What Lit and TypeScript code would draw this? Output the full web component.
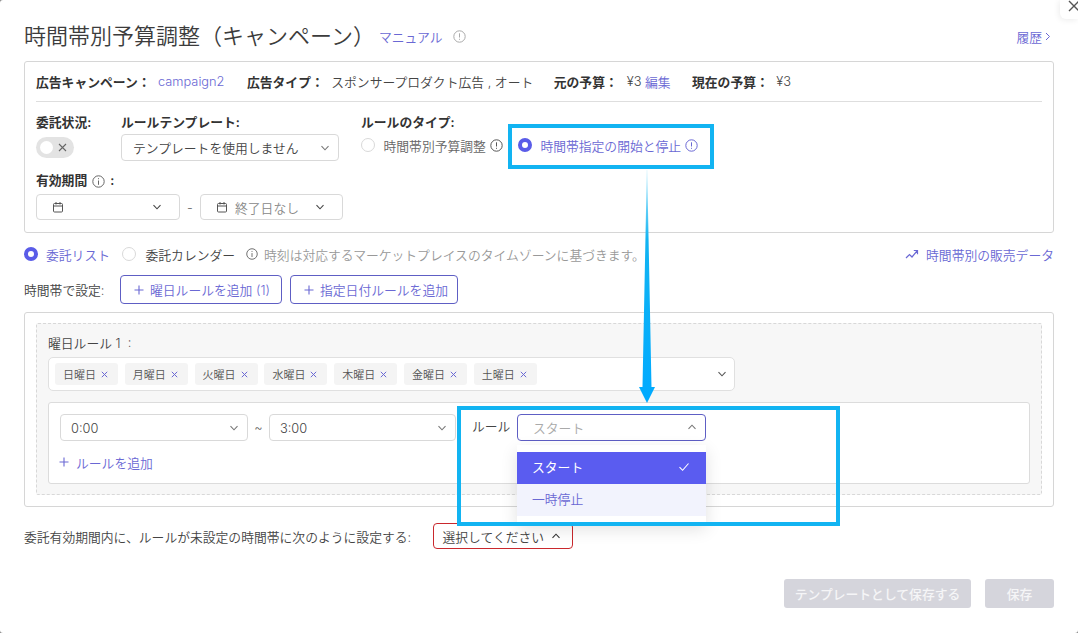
import { LitElement, html, css, svg } from "lit";
import { customElement } from "lit/decorators.js";

const chevron = (up = false, color = "#777") => html`<svg class="chev" width="10" height="10" viewBox="0 0 10 10" fill="none" stroke=${color} stroke-width="1.1"><path d=${up ? "M1.5 6.8 5 3.2l3.5 3.6" : "M1.5 3.2 5 6.8l3.5-3.6"}/></svg>`;
const cal = () => html`<svg width="12" height="12" viewBox="0 0 12 12" fill="none" stroke="#555" stroke-width="1"><rect x="1.5" y="2.5" width="9" height="8.5" rx="1"/><path d="M1.5 5h9M4 1v2.5M8 1v2.5"/></svg>`;
const excl = (color = "#555", size = 13) => html`<svg class="ic" width=${size} height=${size} viewBox="0 0 13 13" fill="none" stroke=${color} stroke-width="1"><circle cx="6.5" cy="6.5" r="5.7"/><path d="M6.5 3.3v4.2M6.5 8.8v1"/></svg>`;
const info = (color = "#666", size = 13) => html`<svg class="ic" width=${size} height=${size} viewBox="0 0 13 13" fill="none" stroke=${color} stroke-width="1"><circle cx="6.5" cy="6.5" r="5.7"/><path d="M6.5 3.2v1M6.5 5.5v4.3"/></svg>`;
const plus = () => html`<svg width="10" height="10" viewBox="0 0 10 10" fill="none" stroke="currentColor" stroke-width="1.1"><path d="M5 .5v9M.5 5h9"/></svg>`;
const days = ["日曜日", "月曜日", "火曜日", "水曜日", "木曜日", "金曜日", "土曜日"];

@customElement("app-root")
export class AppRoot extends LitElement {
  static styles = css`
    :host { display: block; width: 1078px; height: 633px; position: relative; overflow: hidden; background: #8a8a8a;
      font-family: Inter, "Noto Sans CJK JP", sans-serif; font-size: 12.8px; color: #444; font-weight: 350; }
    * { box-sizing: border-box; }
    .page { padding: 0 24px; width: 1078px; height: 633px; background: #fff; border-radius: 3px; }
    .link { color: #6a68d4; }
    .ic { flex: none; }
    .head { display: flex; align-items: center; height: 61px; padding-top: 11px; }
    h1 { margin: 0; font-size: 22px; font-weight: 350; color: #3c3c3c; line-height: 28px; white-space: nowrap; }
    .manual { margin-left: 4px; }
    .head .q { margin-left: 10px; display: flex; }
    .history { margin-left: auto; margin-right: 3px; display: flex; align-items: center; gap: 3px; }
    .card { border: 1px solid #d6d6d6; border-radius: 3px; background: #fff; }
    .card1 { height: 172px; padding: 0 11px; }
    .info-row { height: 40px; border-bottom: 1px solid #dedede; display: flex; align-items: center; white-space: nowrap; }
    b { font-weight: 600; color: #333; }
    .info-row span { white-space: pre; }
    .v { margin-left: 7.5px; }
    .v.yen { margin-left: 9px; }
    .g22 { margin-left: 22.5px; }
    .g18 { margin-left: 20.5px; }
    .g21 { margin-left: 21.5px; }
    .edit { margin-left: 3.5px; }
    .fields { display: flex; margin-top: 11px; }
    .label { height: 20px; line-height: 20px; margin-bottom: 1px; font-weight: 600; color: #333; display: flex; align-items: center; gap: 5px; white-space: nowrap; }
    .f1 { width: 85px; } .f2 { width: 240px; }
    .toggle { width: 38px; height: 21px; margin-top: 4px; border-radius: 11px; background: #e3e3e3; position: relative; }
    .toggle i { position: absolute; left: 4px; top: 4px; width: 13px; height: 13px; border-radius: 50%; background: #fff; }
    .toggle svg { position: absolute; right: 7px; top: 6px; }
    .select { height: 27px; border: 1px solid #d9d9d9; border-radius: 4px; background: #fff; display: flex; align-items: center; padding: 0 8px 0 11px; white-space: nowrap; color: #444; }
    .select .chev { margin-left: auto; flex: none; }
    .s-template { width: 218px; }
    .radios { display: flex; align-items: center; height: 22px; white-space: nowrap; }
    .radio { width: 14px; height: 14px; border-radius: 50%; border: 1px solid #d9d9d9; background: #fff; flex: none; }
    .radio.on { border: 4px solid #5a5ce8; }
    .r-text { margin-left: 8.5px; margin-right: 4px; color: #666; }
    .spacer-s { width: 15px; }
    .target { color: #6a68d4; }
    .dates { display: flex; align-items: center; }
    .valid { margin-top: 10px; }
    .label.vl { margin-bottom: 3px; }
    .dates .select { width: 144px; gap: 7px; padding: 0 17px 0 15px; height: 26px; }
    .dash { width: 20px; text-align: center; color: #666; }
    .dates .end { width: 143px; color: #888; }
    .list-row { display: flex; align-items: center; height: 18px; margin-top: 12px; white-space: nowrap; }
    .list-t1 { margin-left: 8px; }
    .radio2 { margin-left: 12.5px; }
    .list-t2 { margin-left: 9px; }
    .hint { color: #999; display: flex; align-items: center; gap: 6px; margin-left: 11px; }
    .sales { margin-left: auto; display: flex; align-items: center; gap: 7px; }
    .add-row { display: flex; align-items: center; height: 29px; margin-top: 12px; gap: 8px; }
    .add-l { width: 88px; white-space: nowrap; }
    .btn { height: 29px; border: 1px solid #5e5ec4; border-radius: 4px; color: #6a68d4; display: flex; align-items: center; gap: 6px; padding: 0 0 0 13px; background: #fff; white-space: nowrap; }
    .b1 { width: 162px; } .b2 { width: 168px; }
    .card2 { margin-top: 8px; height: 195px; padding: 10px 11px; }
    .dashed { height: 172px; border: 1px dashed #d8d8d8; background: #f7f7f7; padding: 10px 11px; border-radius: 2px; }
    .week-label { height: 20px; line-height: 20px; margin-bottom: 3px; color: #444; white-space: pre; }
    .tags { width: 687px; height: 34px; background: #fff; border: 1px solid #e0e0e0; border-radius: 5px; display: flex; align-items: center; padding: 0 6px; gap: 6.8px; }
    .tag { height: 22px; width: 63px; flex: none; background: #f4f4f4; border-radius: 3px; display: flex; align-items: center; justify-content: space-between; padding: 0 10px 0 8px; font-size: 11px; color: #555; }
    .tag svg { flex: none; }
    .tags .chev { margin-left: auto; margin-right: 1px; }
    .rule { margin-top: 11px; height: 82px; width: 982px; background: #fff; border: 1px solid #dcdcdc; border-radius: 3px; padding: 11px; }
    .times { display: flex; align-items: flex-start; }
    .s-time { width: 188px; padding-top: 1px; padding-left: 10px; }
    .s-time.t2 { width: 187px; }
    .tilde { width: 21px; height: 27px; line-height: 27px; text-align: center; color: #666; }
    .rule-label { width: 61px; height: 26px; line-height: 26px; padding-left: 16px; color: #444; white-space: nowrap; }
    .rule-sel { position: relative; width: 189px; }
    .rule-sel .select { border-color: #5e5ec4; color: #aaa; padding-left: 15px; padding-bottom: 1px; width: 189px; }
    .drop { position: absolute; left: 0; top: 31px; width: 189px; padding: 7px 0; background: #fff; box-shadow: 0 6px 16px rgba(0,0,0,.12); z-index: 2; }
    .opt { height: 32px; display: flex; align-items: center; justify-content: space-between; padding: 0 16px 3px 15px; }
    .opt.sel { background: #5a5cf0; color: #fff; font-weight: 400; }
    .opt.hov { background: #f2f3fd; color: #6a68d4; }
    .add-rule { display: flex; align-items: center; gap: 7px; margin-top: 11px; height: 20px; color: #6a68d4; margin-left: -1px; }
    .bottom { display: flex; align-items: center; margin-top: 16px; height: 26px; white-space: nowrap; }
    .bottom-l { width: 408.5px; }
    .err { height: 26px; width: 140px; border: 1px solid #c9282d; border-radius: 4px; display: flex; align-items: center; gap: 7px; padding: 0 9px; background: #fff; color: #444; }
    .footer { display: flex; justify-content: flex-end; gap: 14px; margin-top: 30px; }
    .ghost { height: 29px; background: #d5d5dc; color: #f5f5f7; border-radius: 3px; display: flex; align-items: center; justify-content: center; font-weight: 500; }
    .g1 { width: 187px; } .g2 { width: 69px; }
    .note { position: absolute; border: 4px solid #12b4f2; z-index: 5; pointer-events: none; }
    .n1 { left: 508px; top: 124px; width: 206px; height: 45px; }
    .n2 { left: 457px; top: 406px; width: 383px; height: 120px; }
    .arrow { position: absolute; left: 637px; top: 170px; z-index: 6; }
    .close { position: absolute; right: 0; top: 0; width: 18px; height: 19px; background: #fff; border-radius: 0 0 0 6px; box-shadow: -1px 1px 6px rgba(0,0,0,.08); }
    .close svg { position: absolute; left: 8px; top: 0; }
  `;

  render() {
    return html`
      <div class="page">
        <div class="head">
          <h1>時間帯別予算調整（キャンペーン）</h1>
          <span class="manual link">マニュアル</span>
          <span class="q">${excl("#aaa", 13)}</span>
          <span class="history link">履歴 <svg width="6" height="9" viewBox="0 0 6 9" fill="none" stroke="#6a68d4"><path d="M1 1l3.5 3.5L1 8"/></svg></span>
        </div>

        <section class="card card1">
          <div class="info-row">
            <b>広告キャンペーン：</b><span class="link v">campaign2</span>
            <b class="g22">広告タイプ：</b><span class="v">スポンサープロダクト広告 , オート</span>
            <b class="g18">元の予算：</b><span class="v yen">¥3</span><span class="link edit">編集</span>
            <b class="g21">現在の予算：</b><span class="v">¥3</span>
          </div>
          <div class="fields">
            <div class="f1">
              <div class="label">委託状況:</div>
              <div class="toggle"><i></i><svg width="9" height="9" viewBox="0 0 9 9" stroke="#666" stroke-width="1.1"><path d="M1 1l7 7M8 1 1 8"/></svg></div>
            </div>
            <div class="f2">
              <div class="label">ルールテンプレート:</div>
              <div class="select s-template">テンプレートを使用しません${chevron()}</div>
            </div>
            <div>
              <div class="label">ルールのタイプ:</div>
              <div class="radios">
                <span class="radio"></span><span class="r-text">時間帯別予算調整</span>${excl("#555")}
                <span class="spacer-s"></span>
                <span class="radio on"></span><span class="r-text target">時間帯指定の開始と停止</span>${excl("#6a68d4")}
              </div>
            </div>
          </div>
          <div class="valid">
            <div class="label vl">有効期間 ${info()} :</div>
            <div class="dates">
              <div class="select">${cal()}${chevron(false, "#444")}</div>
              <span class="dash">-</span>
              <div class="select end">${cal()}終了日なし${chevron(false, "#444")}</div>
            </div>
          </div>
        </section>

        <div class="list-row">
          <span class="radio on"></span><span class="link list-t1">委託リスト</span>
          <span class="radio radio2"></span><span class="list-t2">委託カレンダー</span>
          <span class="hint">${info("#666", 12)}時刻は対応するマーケットプレイスのタイムゾーンに基づきます。</span>
          <span class="sales link"><svg width="14" height="10" viewBox="0 0 14 10" fill="none" stroke="#6a68d4" stroke-width="1.2"><path d="M1 9l3.5-3.5L7 8l5-6M8.8 1.5h3.7v3.7"/></svg>時間帯別の販売データ</span>
        </div>

        <div class="add-row">
          <span class="add-l">時間帯で設定:</span>
          <div class="btn b1">${plus()} 曜日ルールを追加 (1)</div>
          <div class="btn b2">${plus()} 指定日付ルールを追加</div>
        </div>

        <section class="card card2">
          <div class="dashed">
            <div class="week-label">曜日ルール 1  :</div>
            <div class="tags">
              ${days.map((d) => html`<span class="tag">${d}<svg width="7" height="7" viewBox="0 0 7 7" stroke="#6a68d4" stroke-width="1"><path d="M.8.8l5.4 5.4M6.2.8.8 6.2"/></svg></span>`)}
              ${chevron(false, "#555")}
            </div>
            <div class="rule">
              <div class="times">
                <div class="select s-time">0:00${chevron()}</div>
                <span class="tilde">~</span>
                <div class="select s-time t2">3:00${chevron()}</div>
                <span class="rule-label">ルール</span>
                <div class="rule-sel">
                  <div class="select">スタート${chevron(true)}</div>
                  <div class="drop">
                    <div class="opt sel">スタート<svg width="12" height="10" viewBox="0 0 12 10" fill="none" stroke="#fff" stroke-width="1.1"><path d="M1.5 5.2 4.6 8.3 10.5 1.5"/></svg></div>
                    <div class="opt hov">一時停止</div>
                  </div>
                </div>
              </div>
              <div class="add-rule">${plus()} ルールを追加</div>
            </div>
          </div>
        </section>

        <div class="bottom">
          <span class="bottom-l">委託有効期間内に、ルールが未設定の時間帯に次のように設定する:</span>
          <div class="err">選択してください${chevron(true, "#333")}</div>
        </div>

        <div class="footer">
          <div class="ghost g1">テンプレートとして保存する</div>
          <div class="ghost g2">保存</div>
        </div>
      </div>

      <div class="close"><svg width="12" height="12" viewBox="0 0 12 12" stroke="#555" stroke-width="1.4"><path d="M1 1l10 10M11 1 1 11"/></svg></div>
      <div class="note n1"></div>
      <div class="note n2"></div>
      <svg class="arrow" width="20" height="236" viewBox="0 0 20 236">
        ${svg`<defs><linearGradient id="ag" x1="0" y1="0" x2="0" y2="1"><stop offset="0" stop-color="#c4effd"/><stop offset=".3" stop-color="#12b4f2"/><stop offset="1" stop-color="#00aaff"/></linearGradient></defs>
        <polygon points="9.8,0 10.2,0 14.5,217 18,217 10,233 2,217 5.5,217" fill="url(#ag)"/>`}
      </svg>
    `;
  }
}
